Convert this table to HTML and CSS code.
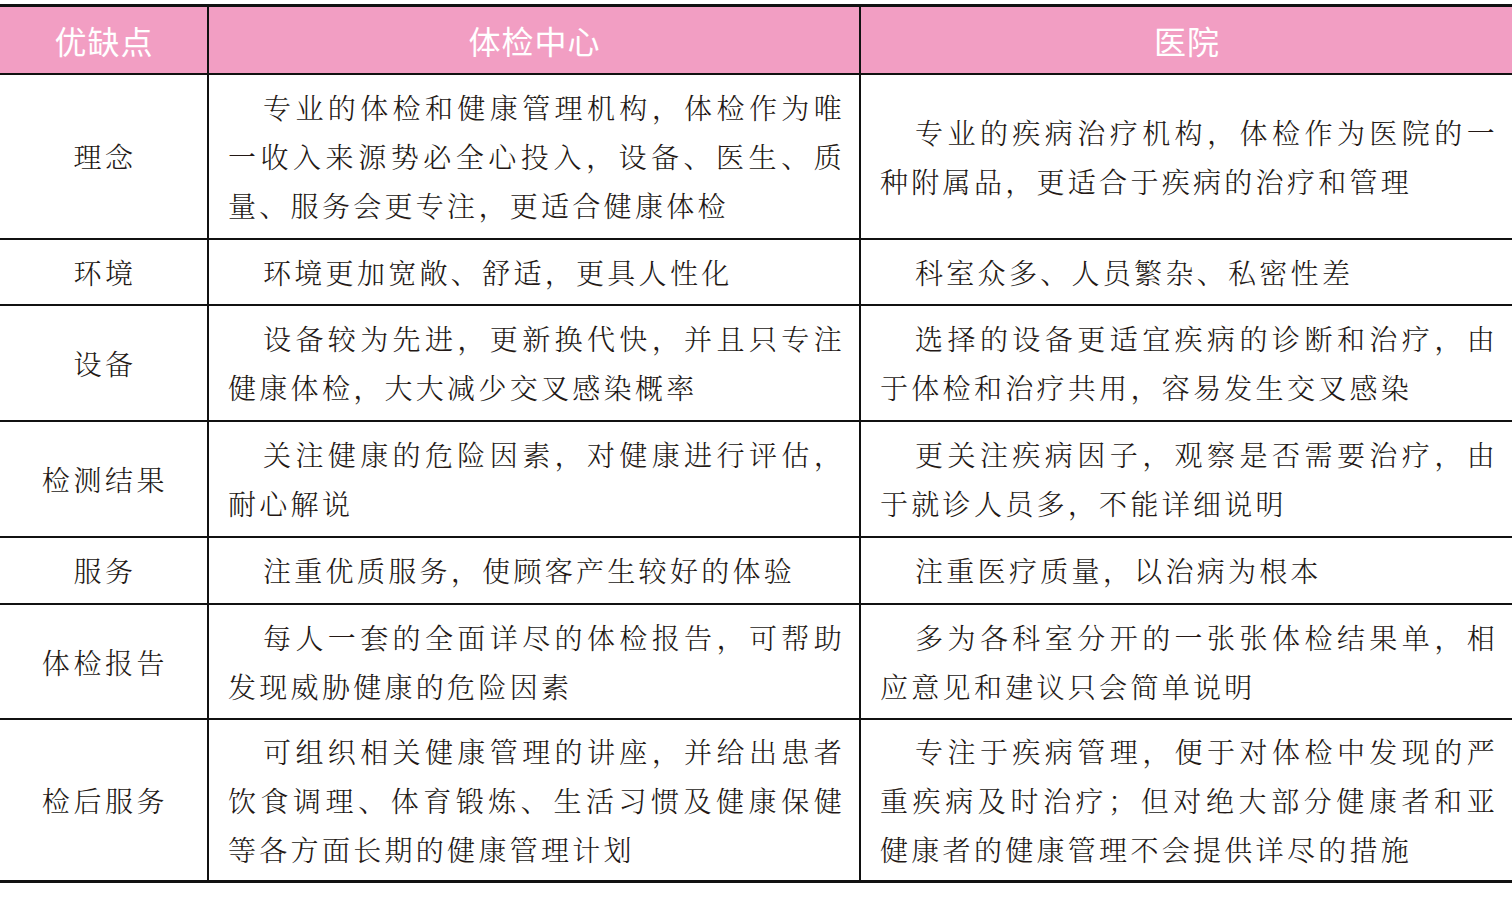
FILE: index.html
```html
<!DOCTYPE html>
<html lang="zh-CN">
<head>
<meta charset="utf-8">
<title>体检中心与医院对比</title>
<link rel="stylesheet" href="styles.css">
</head>
<body>
<table class="cmp">
  <colgroup>
    <col class="c1"><col class="c2"><col class="c3">
  </colgroup>
  <thead>
    <tr>
      <th>优缺点</th>
      <th>体检中心</th>
      <th>医院</th>
    </tr>
  </thead>
  <tbody>
    <tr>
      <td class="k">理念</td>
      <td class="v">专业的体检和健康管理机构，体检作为唯一收入来源势必全心投入，设备、医生、质量、服务会更专注，更适合健康体检</td>
      <td class="v">专业的疾病治疗机构，体检作为医院的一种附属品，更适合于疾病的治疗和管理</td>
    </tr>
    <tr class="short">
      <td class="k">环境</td>
      <td class="v">环境更加宽敞、舒适，更具人性化</td>
      <td class="v">科室众多、人员繁杂、私密性差</td>
    </tr>
    <tr>
      <td class="k">设备</td>
      <td class="v">设备较为先进，更新换代快，并且只专注健康体检，大大减少交叉感染概率</td>
      <td class="v">选择的设备更适宜疾病的诊断和治疗，由于体检和治疗共用，容易发生交叉感染</td>
    </tr>
    <tr>
      <td class="k">检测结果</td>
      <td class="v">关注健康的危险因素，对健康进行评估，耐心解说</td>
      <td class="v">更关注疾病因子，观察是否需要治疗，由于就诊人员多，不能详细说明</td>
    </tr>
    <tr>
      <td class="k">服务</td>
      <td class="v">注重优质服务，使顾客产生较好的体验</td>
      <td class="v">注重医疗质量，以治病为根本</td>
    </tr>
    <tr class="short">
      <td class="k">体检报告</td>
      <td class="v">每人一套的全面详尽的体检报告，可帮助发现威胁健康的危险因素</td>
      <td class="v">多为各科室分开的一张张体检结果单，相应意见和建议只会简单说明</td>
    </tr>
    <tr class="last">
      <td class="k">检后服务</td>
      <td class="v">可组织相关健康管理的讲座，并给出患者饮食调理、体育锻炼、生活习惯及健康保健等各方面长期的健康管理计划</td>
      <td class="v">专注于疾病管理，便于对体检中发现的严重疾病及时治疗；但对绝大部分健康者和亚健康者的健康管理不会提供详尽的措施</td>
    </tr>
  </tbody>
</table>
</body>
</html>
```

FILE: styles.css
```css
html, body {
  margin: 0;
  padding: 0;
  background: #ffffff;
}

body {
  padding-top: 4px;
}

.cmp {
  width: 1512px;
  border-collapse: collapse;
  table-layout: fixed;
  font-family: "Noto Serif CJK SC", "Noto Sans CJK SC", serif;
  color: #231815;
}

.c1 { width: 208px; }
.c2 { width: 652px; }
.c3 { width: 652px; }

.cmp th {
  background: #f29ec3;
  color: #ffffff;
  font-family: "Noto Sans CJK SC", sans-serif;
  font-weight: 400;
  font-size: 32px;
  letter-spacing: 1px;
  height: 66px;
  padding: 0 0 0 1px;
  line-height: 66px;
  text-align: center;
  border-top: 3px solid #111;
  border-bottom: 2px solid #111;
  border-left: 2px solid #111;
}

.cmp th:first-child,
.cmp td:first-child {
  border-left: none;
}

.cmp td {
  border-top: 2px solid #111;
  border-bottom: 2px solid #111;
  border-left: 2px solid #111;
  padding: 8px 0;
  line-height: 49px;
  font-size: 28px;
  font-weight: 300;
  vertical-align: middle;
}

.cmp .short td {
  padding-bottom: 7px;
}

.cmp .last td {
  border-bottom: 3px solid #111;
  padding-top: 7px;
  padding-bottom: 6px;
}

.cmp td.k {
  text-align: center;
  letter-spacing: 3.6px;
  padding-left: 3px;
}

.cmp td.v {
  text-align: justify;
  text-indent: 35px;
  letter-spacing: 3.3px;
  padding-left: 19px;
  padding-right: 14px;
}
```
